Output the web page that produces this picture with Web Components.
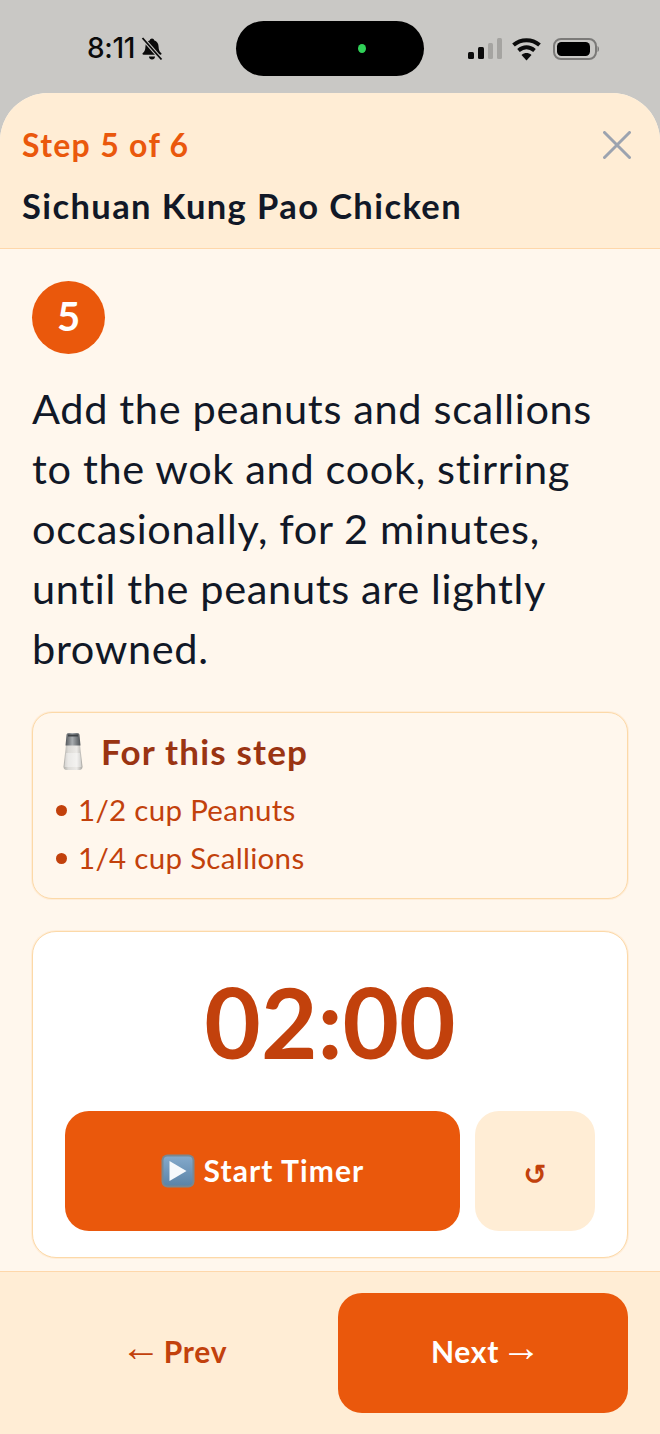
<!DOCTYPE html>
<html lang="en">
<head>
<meta charset="utf-8">
<title>Sichuan Kung Pao Chicken</title>
<style>
  html, body { margin: 0; padding: 0; }
  body {
    width: 660px;
    height: 1434px;
    overflow: hidden;
    background: #c9c8c5;
    font-family: Lato, "Noto Sans", sans-serif;
  }
</style>
</head>
<body>
<status-bar time="8:11"></status-bar>
<step-sheet>
  <sheet-header slot="header" step="Step 5 of 6" recipe="Sichuan Kung Pao Chicken"></sheet-header>
  <step-badge>5</step-badge>
  <step-text>Add the peanuts and scallions to the wok and cook, stirring occasionally, for 2 minutes, until the peanuts are lightly browned.</step-text>
  <ingredient-card>
    <ingredient-item>1/2 cup Peanuts</ingredient-item>
    <ingredient-item>1/4 cup Scallions</ingredient-item>
  </ingredient-card>
  <timer-card time="02:00"></timer-card>
  <step-footer slot="footer"></step-footer>
</step-sheet>

<script>
'use strict';

class StatusBar extends HTMLElement {
  constructor() {
    super();
    this.attachShadow({ mode: 'open' });
    this.shadowRoot.innerHTML = `
      <style>
        :host { display: flex; align-items: flex-start; height: 93px; box-sizing: border-box; padding: 21px 0 0 87px; color: #0b0b0b; }
        .left { display: flex; align-items: center; gap: 6px; width: 149px; height: 55px; font: 500 28px/55px Inter, sans-serif; letter-spacing: -0.3px; }
        .island { display: flex; align-items: center; justify-content: flex-end; box-sizing: border-box; padding-right: 58px; width: 188px; height: 55px; border-radius: 28px; background: #000; }
        .island i { display: block; width: 8px; height: 9px; border-radius: 50%; background: #30d158; }
        .right { display: flex; align-items: center; height: 55px; margin-left: 44px; }
      </style>
      <div class="left"><span id="t"></span>
        <svg width="22" height="24" viewBox="0 0 22 24" fill="#0b0b0b">
          <path d="M11 1.500c1.200 0 2 .8 2.100 1.800 3 .9 4.400 3.400 4.500 6.600.1 2.800.8 4.600 2.600 6.200.7.7.3 1.700-.7 1.700H2.500c-1 0-1.400-1-.7-1.700 1.800-1.600 2.500-3.400 2.600-6.200.1-3.200 1.500-5.700 4.500-6.600C9 2.300 9.800 1.500 11 1.500z"/>
          <path d="M8 19.500h6c0 1.800-1.300 3-3 3s-3-1.200-3-3z"/>
          <path d="M1.500 1 20.500 22.500" stroke="#c9c8c5" stroke-width="3.800"/>
          <path d="M1.500 1 20.500 22.500" stroke="#0b0b0b" stroke-width="1.800"/>
        </svg>
      </div>
      <div class="island"><i></i></div>
      <div class="right">
        <svg width="132" height="26" viewBox="0 0 132 26">
          <rect x="0" y="16" width="6" height="7" rx="1.500" fill="#0b0b0b"/>
          <rect x="10" y="11" width="6" height="12" rx="1.500" fill="#0b0b0b"/>
          <rect x="20" y="7" width="5" height="16" rx="1.500" fill="#a5a4a1"/>
          <rect x="29" y="2" width="5" height="21" rx="1.500" fill="#a5a4a1"/>
          <g fill="none" stroke="#0b0b0b" stroke-width="4">
            <path d="M45.500 9c7.500-6.500 18.500-6.500 26 0"/>
            <path d="M50.500 14.500c5-4.200 11-4.200 16 0"/>
          </g>
          <path d="M53.500 19c3.300-2.600 6.700-2.600 10 0l-5 5.500z" fill="#0b0b0b"/>
          <rect x="86" y="3" width="42" height="20" rx="7" fill="none" stroke="#7b7a78" stroke-width="2"/>
          <rect x="89" y="6" width="33" height="14" rx="4.500" fill="#000"/>
          <path d="M129.500 10v6c1-.5 1.500-1.500 1.500-3s-.5-2.500-1.500-3z" fill="#7b7a78"/>
        </svg>
      </div>`;
    this.shadowRoot.getElementById('t').textContent = this.getAttribute('time');
  }
}

class StepSheet extends HTMLElement {
  constructor() {
    super();
    this.attachShadow({ mode: 'open' });
    this.shadowRoot.innerHTML = `
      <style>
        :host { display: flex; flex-direction: column; height: 1341px; border-radius: 48px 48px 0 0; overflow: hidden; background: #fff7ed; }
        main { flex: 1; min-height: 0; box-sizing: border-box; padding: 32px 32px 0; display: flex; flex-direction: column; align-items: stretch; }
      </style>
      <slot name="header"></slot>
      <main><slot></slot></main>
      <slot name="footer"></slot>`;
  }
}

class SheetHeader extends HTMLElement {
  constructor() {
    super();
    this.attachShadow({ mode: 'open' });
    this.shadowRoot.innerHTML = `
      <style>
        :host { display: block; box-sizing: border-box; height: 156px; padding: 31px 29px 0 22px; background: #ffedd5; border-bottom: 1px solid #fed7aa; }
        .top { display: flex; justify-content: space-between; align-items: center; height: 42px; }
        .step { font: 700 32px/42px Lato, sans-serif; letter-spacing: 1.3px; color: #ea580c; }
        .recipe { margin-top: 19px; font: 700 34.500px/42px Lato, sans-serif; letter-spacing: 1.4px; color: #111827; }
        svg { display: block; }
      </style>
      <div class="top">
        <span class="step"></span>
        <svg width="28" height="28" viewBox="0 0 28 28" fill="none" stroke="#9ca3af" stroke-width="3" stroke-linecap="round"><path d="M1.500 1.500 26.500 26.500M26.500 1.500 1.500 26.500"/></svg>
      </div>
      <div class="recipe"></div>`;
    this.shadowRoot.querySelector('.step').textContent = this.getAttribute('step');
    this.shadowRoot.querySelector('.recipe').textContent = this.getAttribute('recipe');
  }
}

class StepBadge extends HTMLElement {
  constructor() {
    super();
    this.attachShadow({ mode: 'open' });
    this.shadowRoot.innerHTML = `
      <style>
        :host { display: flex; align-self: flex-start; align-items: center; justify-content: center; box-sizing: border-box; width: 73px; height: 73px; padding-bottom: 3px; border-radius: 50%; background: #ea580c; color: #fff; font: 700 40px/1 Lato, sans-serif; }
      </style>
      <slot></slot>`;
  }
}

class StepText extends HTMLElement {
  constructor() {
    super();
    this.attachShadow({ mode: 'open' });
    this.shadowRoot.innerHTML = `
      <style>
        :host { display: block; margin-top: 24px; font: 400 41.500px/60px Lato, sans-serif; letter-spacing: .65px; color: #111827; }
      </style>
      <slot></slot>`;
  }
}

class IngredientCard extends HTMLElement {
  constructor() {
    super();
    this.attachShadow({ mode: 'open' });
    this.shadowRoot.innerHTML = `
      <style>
        :host { display: block; box-sizing: border-box; height: 187px; margin-top: 34px; padding: 16px 24px 0 23px; border: 1px solid #fcd9a8; box-shadow: 0 0 0 1px rgba(254, 215, 170, .3); border-radius: 20px; background: #fff7ed; }
        h2 { display: flex; align-items: center; gap: 18px; margin: 0 0 13px; padding-left: 7px; height: 44px; font: 700 35px/44px Lato, sans-serif; letter-spacing: 1.2px; color: #9a3412; }
        svg { display: block; }
      </style>
      <h2>
        <svg width="20" height="37" viewBox="0 0 20 37">
          <defs>
            <linearGradient id="glass" x1="0" x2="1" y1="0" y2="0"><stop offset="0" stop-color="#aeaca7"/><stop offset=".25" stop-color="#dcdad6"/><stop offset=".7" stop-color="#eceae7"/><stop offset="1" stop-color="#a9a7a2"/></linearGradient>
            <linearGradient id="cap" x1="0" x2="1" y1="0" y2="0"><stop offset="0" stop-color="#54585c"/><stop offset=".45" stop-color="#a9adb0"/><stop offset="1" stop-color="#4e5256"/></linearGradient>
          </defs>
          <path d="M3 12h14l2.500 21.500c0 2-1 3.500-3 3.500H3.500c-2 0-3-1.500-3-3.500z" fill="url(#glass)"/>
          <path d="M3.500 2C3.500 .8 4.500 0 6 0h8c1.500 0 2.500.8 2.500 2L17.500 12.500h-15z" fill="url(#cap)"/>
          <path d="M5 1.500h10v2H5z" fill="#3f4347"/>
          <path d="M3 20h14l1.500 14H1.500z" fill="#fff" opacity=".4"/>
        </svg>
        For this step
      </h2>
      <slot></slot>`;
  }
}

class IngredientItem extends HTMLElement {
  constructor() {
    super();
    this.attachShadow({ mode: 'open' });
    this.shadowRoot.innerHTML = `
      <style>
        :host { display: flex; align-items: center; gap: 11px; height: 48px; font: 400 29.500px/48px Lato, sans-serif; letter-spacing: .3px; color: #c2410c; }
        i { display: block; width: 11px; height: 11px; border-radius: 50%; background: #c2410c; }
      </style>
      <i></i><span><slot></slot></span>`;
  }
}

class AppButton extends HTMLElement {
  constructor() {
    super();
    this.attachShadow({ mode: 'open' });
    this.shadowRoot.innerHTML = `
      <style>
        :host { display: flex; align-items: center; justify-content: center; gap: 9px; height: 120px; border-radius: 24px; font: 700 30px/1 Lato, sans-serif; background: transparent; color: #c2410c; }
        :host([variant="primary"]) { background: #ea580c; color: #fff; }
        :host([variant="soft"]) { background: #ffedd5; }
      </style>
      <slot></slot>`;
  }
}

class TimerCard extends HTMLElement {
  constructor() {
    super();
    this.attachShadow({ mode: 'open' });
    this.shadowRoot.innerHTML = `
      <style>
        :host { display: block; box-sizing: border-box; height: 327px; margin-top: 32px; padding: 32px 32px 0; background: #fff; border: 1px solid #fcd9a8; box-shadow: 0 0 0 1px rgba(254, 215, 170, .3); border-radius: 24px; }
        .clock { height: 115px; margin-bottom: 32px; text-align: center; font: 700 97.500px/115px Lato, sans-serif; color: #c2410c; }
        .row { display: grid; grid-template-columns: 1fr 120px; gap: 15px; }
        svg { display: block; }
        .label { padding-bottom: 2px; letter-spacing: 1.1px; }
        .reset { padding-top: 7px; font: 700 28px/1 "DejaVu Sans", sans-serif; }
      </style>
      <div class="clock"></div>
      <div class="row">
        <app-button variant="primary">
          <svg width="34" height="34" viewBox="0 0 34 34">
            <defs><linearGradient id="blue" x1="0" x2="0" y1="0" y2="1"><stop offset="0" stop-color="#84a9cb"/><stop offset="1" stop-color="#5b84a8"/></linearGradient></defs>
            <rect x=".500" y=".500" width="33" height="33" rx="6" fill="#7a8790"/>
            <rect x="2.500" y="2.500" width="29" height="29" rx="4" fill="url(#blue)"/>
            <path d="M8.500 7 25.500 17 8.500 27z" fill="#f6f9fc"/>
          </svg>
          <span class="label">Start Timer</span>
        </app-button>
        <app-button variant="soft"><span class="reset">↺</span></app-button>
      </div>`;
    this.shadowRoot.querySelector('.clock').textContent = this.getAttribute('time');
  }
}

class StepFooter extends HTMLElement {
  constructor() {
    super();
    this.attachShadow({ mode: 'open' });
    this.shadowRoot.innerHTML = `
      <style>
        :host { display: grid; grid-template-columns: 1fr 290px; gap: 16px; box-sizing: border-box; height: 163px; padding: 21px 32px 0; background: #ffedd5; border-top: 1px solid #fed7aa; }
        .arrow { padding-bottom: 12px; font: 400 40px/1 "Liberation Sans", sans-serif; }
        .back { margin: 0 -6px 0 -6px; }
        .forward { margin: 0 -6px 0 -7px; }
        .label { padding-bottom: 4px; letter-spacing: .7px; }
      </style>
      <app-button><span class="arrow back">←</span><span class="label">Prev</span></app-button>
      <app-button variant="primary"><span class="label">Next</span><span class="arrow forward">→</span></app-button>`;
  }
}

customElements.define('status-bar', StatusBar);
customElements.define('step-sheet', StepSheet);
customElements.define('sheet-header', SheetHeader);
customElements.define('step-badge', StepBadge);
customElements.define('step-text', StepText);
customElements.define('ingredient-card', IngredientCard);
customElements.define('ingredient-item', IngredientItem);
customElements.define('app-button', AppButton);
customElements.define('timer-card', TimerCard);
customElements.define('step-footer', StepFooter);
</script>
</body>
</html>
